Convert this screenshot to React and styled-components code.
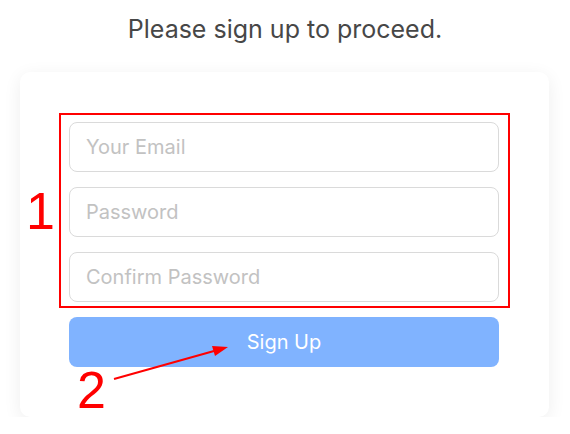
import React from 'react'
import styled, { createGlobalStyle } from 'styled-components'

const GlobalStyle = createGlobalStyle`
  body {
    margin: 0;
    background: #fff;
    font-family: Inter, "Noto Sans", sans-serif;
  }
`

const Page = styled.div`
  width: 570px;
  display: flex;
  flex-direction: column;
  align-items: center;
  padding-top: 14px;
`

const Title = styled.h1`
  margin: 0 0 28px;
  font-size: 25px;
  line-height: 30px;
  font-weight: 400;
  color: #474747;
`

const Card = styled.div`
  position: relative;
  box-sizing: border-box;
  width: 529px;
  margin-left: -1px;
  padding: 50px 50px 50px 49px;
  background: #fff;
  border-radius: 10px;
  box-shadow: 0 4px 18px rgba(0, 0, 0, 0.07);
  display: flex;
  flex-direction: column;
  gap: 15px;
`

const Highlight = styled.div`
  display: flex;
  flex-direction: column;
  gap: 15px;
  margin: -9px -11px -6px -10px;
  padding: 7px 9px 4px 8px;
  border: 2px solid #f00;
`

const Input = styled.input`
  box-sizing: border-box;
  width: 100%;
  height: 50px;
  padding: 0 16px;
  border: 1px solid #dadada;
  border-radius: 8px;
  font-family: Inter, "Noto Sans", sans-serif;
  font-size: 20px;
  color: #333;
  outline: none;
  &::placeholder {
    color: #c2c2c2;
  }
`

const Button = styled.button`
  height: 50px;
  border: none;
  border-radius: 8px;
  background: #80b3ff;
  color: #fff;
  font-family: Inter, "Noto Sans", sans-serif;
  font-size: 20px;
  cursor: pointer;
`

const Mark = styled.span`
  position: absolute;
  left: ${p => p.x}px;
  top: ${p => p.y}px;
  font-family: "Liberation Sans", Arial, sans-serif;
  font-size: 52px;
  line-height: 1;
  color: #f00;
`

const Arrow = styled.svg`
  position: absolute;
  left: 90px;
  top: 268px;
  pointer-events: none;
`

const App = () => {
  return (
    <>
      <GlobalStyle />
      <Page>
        <Title>Please sign up to proceed.</Title>
        <Card>
          <Highlight>
            <Input placeholder="Your Email" />
            <Input type="password" placeholder="Password" />
            <Input type="password" placeholder="Confirm Password" />
          </Highlight>
          <Button>Sign Up</Button>
          <Mark x={6} y={113}>1</Mark>
          <Mark x={57} y={292}>2</Mark>
          <Arrow width="125" height="45" viewBox="0 0 125 45">
            <line x1="4" y1="39" x2="104" y2="11" stroke="#f00" strokeWidth="2" />
            <polygon points="118,7 105,16 102,6" fill="#f00" />
          </Arrow>
        </Card>
      </Page>
    </>
  )
}

export default App
